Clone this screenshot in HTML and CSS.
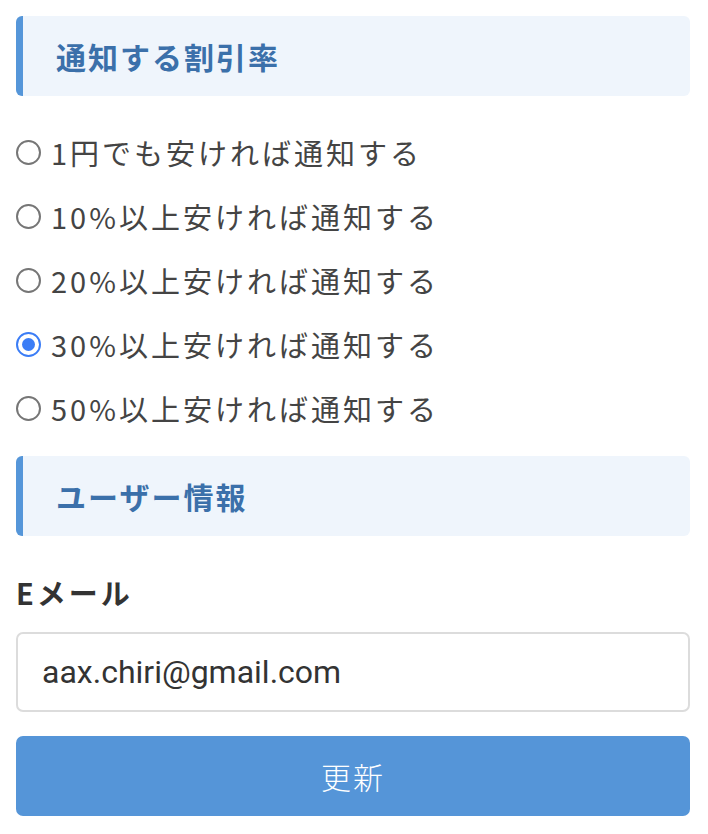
FILE: index.html
```html
<!DOCTYPE html>
<html lang="ja">
<head>
<meta charset="utf-8">
<title>通知設定</title>
<link rel="stylesheet" href="styles.css">
</head>
<body>
<div class="page">
  <h2 class="section-title">通知する割引率</h2>
  <div class="options">
    <label class="option"><input type="radio" name="rate" class="radio"><span class="option-text">1円でも安ければ通知する</span></label>
    <label class="option"><input type="radio" name="rate" class="radio"><span class="option-text">10%以上安ければ通知する</span></label>
    <label class="option"><input type="radio" name="rate" class="radio"><span class="option-text">20%以上安ければ通知する</span></label>
    <label class="option"><input type="radio" name="rate" class="radio" checked><span class="option-text">30%以上安ければ通知する</span></label>
    <label class="option"><input type="radio" name="rate" class="radio"><span class="option-text">50%以上安ければ通知する</span></label>
  </div>
  <h2 class="section-title">ユーザー情報</h2>
  <div class="field-label">Eメール</div>
  <input class="text-input" type="email" value="aax.chiri@gmail.com">
  <button class="submit" type="button">更新</button>
</div>
</body>
</html>
```

FILE: styles.css
```css
* { box-sizing: border-box; }
html, body { margin: 0; padding: 0; background: #fff; }
body {
  font-family: "Noto Sans CJK JP", "Noto Sans", sans-serif;
  color: #444;
}
.page {
  padding: 16px 18px 16px 16px;
  display: flex;
  flex-direction: column;
}
.section-title {
  margin: 0;
  height: 80px;
  display: flex;
  align-items: center;
  background: #eff5fc;
  border-left: 7px solid #5596d9;
  border-radius: 6px;
  padding-left: 33px;
  font-size: 30px;
  font-weight: 700;
  letter-spacing: 2px;
  color: #3b70aa;
}
.options {
  display: flex;
  flex-direction: column;
  margin: 24px 0 16px;
}
.option {
  height: 64px;
  display: flex;
  align-items: center;
  gap: 10px;
  font-size: 29px;
  letter-spacing: 3px;
  color: #444;
}
.radio {
  appearance: none;
  -webkit-appearance: none;
  margin: 0;
  width: 25px;
  height: 25px;
  border: 2px solid #767676;
  border-radius: 50%;
  background: #fff;
  display: grid;
  place-items: center;
  flex: none;
}
.radio:checked {
  border-color: #3b7df6;
}
.radio:checked::after {
  content: "";
  width: 13px;
  height: 13px;
  border-radius: 50%;
  background: #3b7df6;
}
.field-label {
  margin-top: 36px;
  height: 40px;
  display: flex;
  align-items: center;
  font-size: 29px;
  font-weight: 700;
  color: #333;
  letter-spacing: 3px;
}
.text-input {
  margin-top: 20px;
  height: 80px;
  width: 100%;
  border: 2px solid #dcdcdc;
  border-radius: 7px;
  padding: 0 24px;
  font-family: Roboto, "Liberation Sans", sans-serif;
  font-size: 32px;
  letter-spacing: 0;
  color: #333;
  background: #fff;
  outline: none;
}
.submit {
  margin-top: 24px;
  height: 80px;
  width: 100%;
  border: none;
  border-radius: 7px;
  background: #5595d8;
  color: #fff;
  font-family: "Noto Sans CJK JP", sans-serif;
  font-size: 30px;
  font-weight: 300;
  letter-spacing: 2px;
}
```
